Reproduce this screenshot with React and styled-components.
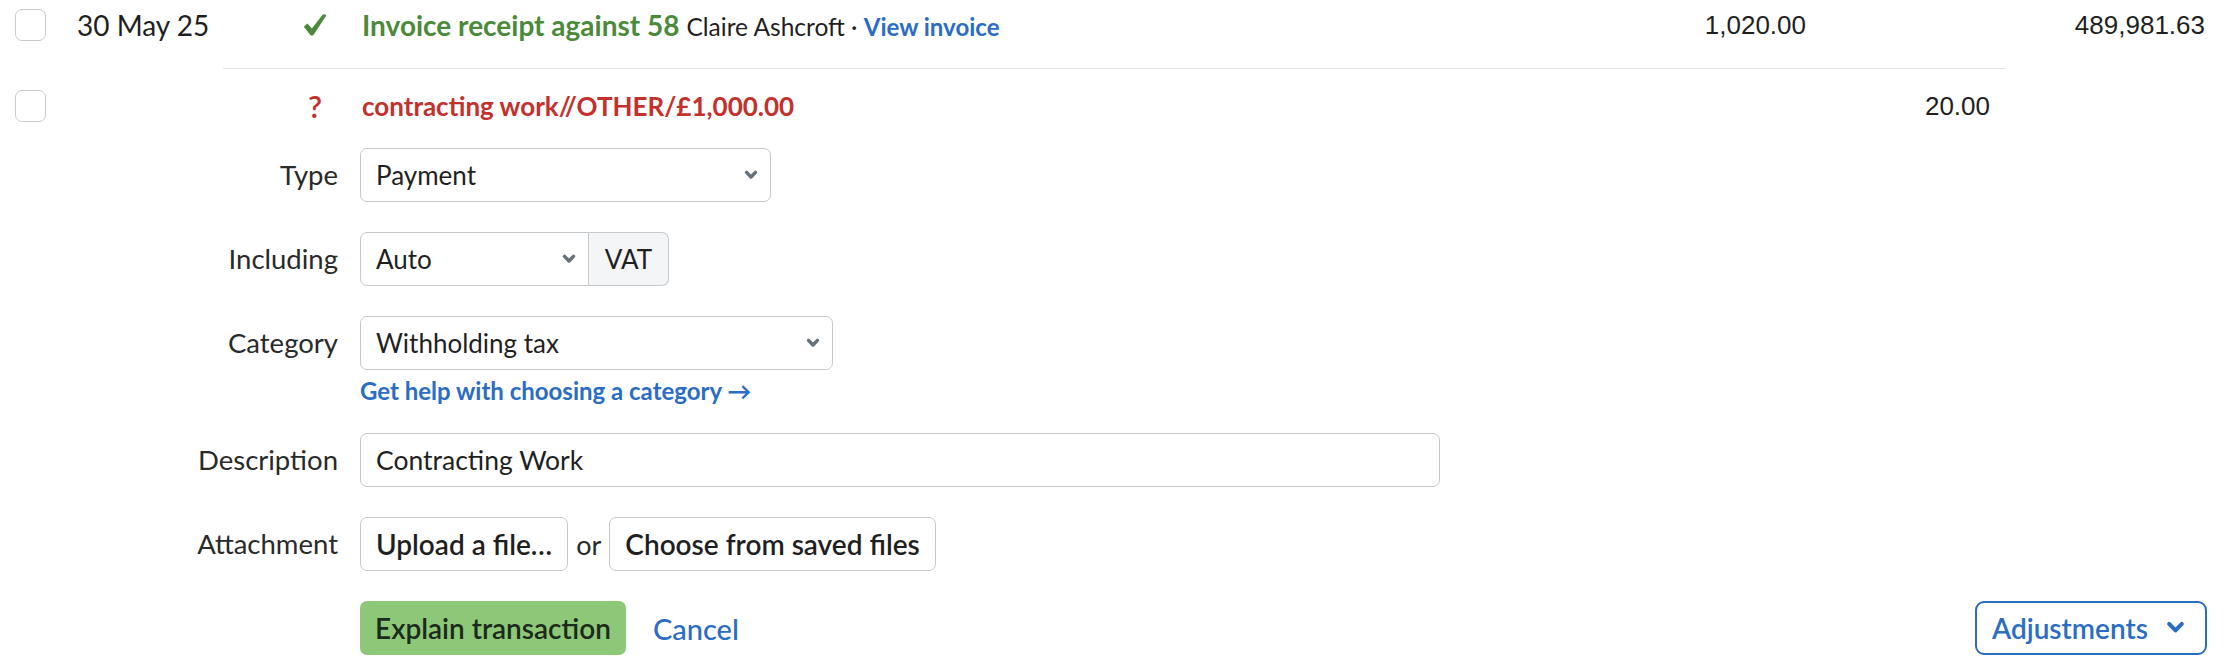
import React from 'react';
import styled, { createGlobalStyle } from 'styled-components';

const GlobalStyle = createGlobalStyle`
  html, body { margin: 0; padding: 0; background: #ffffff; }
  body {
    font-family: Lato, "Noto Sans", sans-serif;
    font-size: 26px;
    color: #1f1f1f;
  }
  * { box-sizing: border-box; }
`;

const Page = styled.div`
  width: 2234px;
  height: 672px;
  overflow: hidden;
  background: #ffffff;
`;

const TxRow = styled.div`
  display: grid;
  grid-template-columns: 77px 226px 59px 1fr 200px 399px;
  padding: 9px 29px 0 0;
  height: 68px;
  align-items: start;
  line-height: 32px;
`;

const Checkbox = styled.span`
  display: block;
  width: 31px;
  height: 32px;
  margin-left: 15px;
  border: 1.5px solid #c9cacd;
  border-radius: 7px;
  background: #fff;
`;

const DateCell = styled.div`
  font-size: 28px;
  color: #1f1f1f;
`;

const IconCell = styled.div`
  width: 24px;
  height: 32px;
  display: flex;
  align-items: center;
  justify-content: center;
`;

const Question = styled.span`
  color: #c4302b;
  font-weight: 600;
  font-size: 31px;
  line-height: 32px;
`;

const Description = styled.div`
  white-space: nowrap;
`;

const Title = styled.span`
  font-weight: 700;
  font-size: ${p => p.$size || 26}px;
  color: ${p => p.$tone === 'bad' ? '#c4302b' : '#4c8a3b'};
`;

const Meta = styled.span`
  font-size: 24.5px;
  color: #1f1f1f;
  margin-left: 7px;
`;

const MetaLink = styled.a`
  font-size: 24px;
  font-weight: 700;
  color: #2b6cc4;
  text-decoration: none;
`;

const Amount = styled.div`
  font-family: "Liberation Sans", Arial, sans-serif;
  font-size: 26px;
  color: #1f1f1f;
  text-align: right;
`;

const ExplainHeader = styled.div`
  display: grid;
  grid-template-columns: 223px 1fr 228px;
  line-height: 32px;
`;

const CheckCell = styled.div`
  padding-top: 22px;
`;

const Panel = styled.div`
  border-top: 1px solid #e3e3ea;
  padding: 21px 16px 0 80px;
  display: grid;
  grid-template-columns: 59px 1fr auto;
  align-items: start;
`;

const Form = styled.div`
  margin-top: 26px;
  padding-right: 27px;
  display: flex;
  flex-direction: column;
  gap: 30px;
`;

const Field = styled.div`
  display: grid;
  grid-template-columns: 338px 1fr;
  column-gap: 22px;
  align-items: start;
`;

const Label = styled.div`
  text-align: right;
  line-height: 54px;
  font-size: 27.5px;
  color: #2a2a2a;
`;

const Control = styled.div`
  display: flex;
  flex-direction: column;
  align-items: flex-start;
`;

const Select = styled.div`
  width: ${p => p.$width}px;
  height: 54px;
  display: flex;
  align-items: center;
  justify-content: space-between;
  padding: 0 13px 0 15px;
  border: 1.5px solid #c5c8cd;
  border-radius: ${p => p.$joined ? '7px 0 0 7px' : '7px'};
  background: #fff;
  font-size: 26px;
  color: #1f1f1f;
`;

const Group = styled.div`
  display: flex;
`;

const Addon = styled.div`
  width: 80px;
  height: 54px;
  display: flex;
  align-items: center;
  justify-content: center;
  border: 1.5px solid #c5c8cd;
  border-left: none;
  border-radius: 0 7px 7px 0;
  background: #f4f5f7;
  font-size: 26px;
  color: #1f1f1f;
`;

const HelpLink = styled.a`
  margin-top: 9px;
  line-height: 24px;
  font-size: 24px;
  font-weight: 700;
  color: #2b6cc4;
  text-decoration: none;
`;

const TextInput = styled.div`
  width: ${p => p.$width}px;
  height: 54px;
  display: flex;
  align-items: center;
  padding: 0 15px;
  border: 1.5px solid #c5c8cd;
  border-radius: 7px;
  font-size: 26.5px;
  color: #1f1f1f;
`;

const Row = styled.div`
  display: flex;
  align-items: center;
  gap: ${p => p.$gap || 0}px;
`;

const Button = styled.button`
  height: 54px;
  padding: 0 15px;
  border: 1.5px solid #c5c8cd;
  border-radius: 7px;
  background: #fff;
  font-family: Lato, "Noto Sans", sans-serif;
  font-size: 28px;
  font-weight: 600;
  color: #1f1f1f;
`;

const Or = styled.span`
  font-size: 27px;
  color: #2a2a2a;
`;

const PrimaryButton = styled.button`
  height: 54px;
  padding: 0 15px;
  border: none;
  border-radius: 7px;
  background: #8dc878;
  font-family: Lato, "Noto Sans", sans-serif;
  font-size: 28px;
  font-weight: 600;
  color: #1c2a1c;
`;

const LinkButton = styled.a`
  font-size: 29px;
  font-weight: 500;
  color: #2b6cc4;
  text-decoration: none;
`;

const Actions = styled.div`
  display: flex;
  align-items: center;
  justify-content: space-between;
`;

const OutlineButton = styled.button`
  width: 232px;
  height: 54px;
  display: flex;
  align-items: center;
  justify-content: space-between;
  padding: 0 21px 0 15px;
  border: 2px solid #2b6cc4;
  border-radius: 9px;
  background: #fff;
  font-family: Lato, "Noto Sans", sans-serif;
  font-size: 28px;
  font-weight: 600;
  color: #2b6cc4;
`;

const Chevron = ({ color = '#66717b', w = 12, sw = 3.2 }) => (
  <svg width={w} height={w * 0.65} viewBox="0 0 11 7" fill="none" overflow="visible">
    <path d="M1.4 1.2 L5.5 5.4 L9.6 1.2" stroke={color} strokeWidth={sw} strokeLinecap="round" strokeLinejoin="round" />
  </svg>
);

const CheckMark = () => (
  <svg width="24" height="24" viewBox="0 0 24 24">
    <path
      d="M0.8 13.8 L4.4 10.6 L8.9 15.4 L19.6 1.8 Q21.6 0.4 23.3 2.4 L10.8 21.6 Q9.2 23.6 7.4 22 Z"
      fill="#4c8a3b"
    />
  </svg>
);

export default function App() {
  return (
    <Page>
      <GlobalStyle />
      <TxRow>
        <Checkbox />
        <DateCell>30 May 25</DateCell>
        <IconCell><CheckMark /></IconCell>
        <Description>
          <Title $size={28}>Invoice receipt against 58</Title>
          <Meta>Claire Ashcroft · </Meta>
          <MetaLink href="#">View invoice</MetaLink>
        </Description>
        <Amount>1,020.00</Amount>
        <Amount>489,981.63</Amount>
      </TxRow>

      <ExplainHeader>
        <CheckCell><Checkbox /></CheckCell>
        <Panel>
          <IconCell><Question>?</Question></IconCell>
          <Description>
            <Title $tone="bad" $size={26}>contracting work//OTHER/£1,000.00</Title>
          </Description>
          <Amount>20.00</Amount>
        </Panel>
        <div />
      </ExplainHeader>

      <Form>
        <Field>
          <Label>Type</Label>
          <Control>
            <Select $width={411}>Payment<Chevron /></Select>
          </Control>
        </Field>
        <Field>
          <Label>Including</Label>
          <Control>
            <Group>
              <Select $width={229} $joined>Auto<Chevron /></Select>
              <Addon>VAT</Addon>
            </Group>
          </Control>
        </Field>
        <Field>
          <Label>Category</Label>
          <Control>
            <Select $width={473}>Withholding tax<Chevron /></Select>
            <HelpLink href="#">Get help with choosing a category →</HelpLink>
          </Control>
        </Field>
        <Field>
          <Label>Description</Label>
          <Control>
            <TextInput $width={1080}>Contracting Work</TextInput>
          </Control>
        </Field>
        <Field>
          <Label>Attachment</Label>
          <Control>
            <Row $gap={8}>
              <Button>Upload a file…</Button>
              <Or>or</Or>
              <Button>Choose from saved files</Button>
            </Row>
          </Control>
        </Field>
        <Field>
          <div />
          <Actions>
            <Row $gap={27}>
              <PrimaryButton>Explain transaction</PrimaryButton>
              <LinkButton href="#">Cancel</LinkButton>
            </Row>
            <OutlineButton>Adjustments<Chevron color="#2b6cc4" w={17} sw={2.6} /></OutlineButton>
          </Actions>
        </Field>
      </Form>
    </Page>
  );
}
